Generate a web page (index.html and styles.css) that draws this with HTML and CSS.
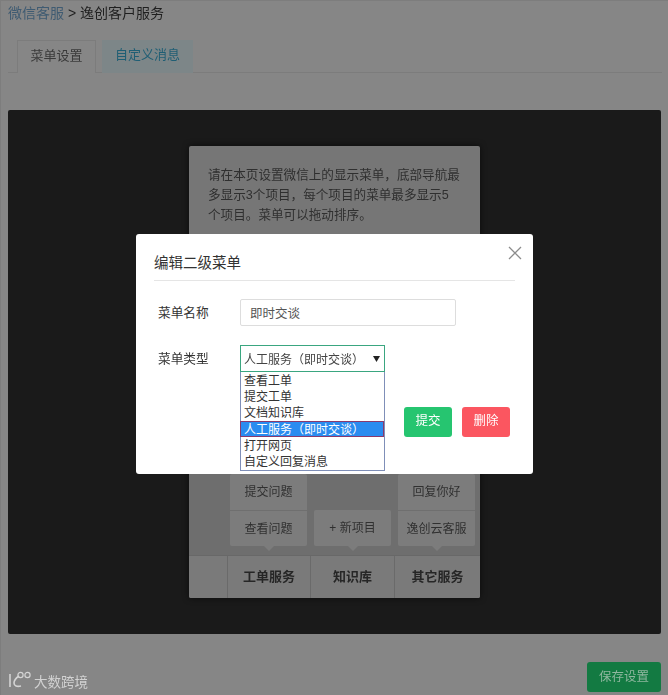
FILE: index.html
```html
<!DOCTYPE html>
<html lang="zh">
<head>
<meta charset="utf-8">
<title>微信客服</title>
<link rel="stylesheet" href="styles.css">
</head>
<body>
<div class="page">
  <div class="crumb"><a class="crumb-link">微信客服</a> &gt; 逸创客户服务</div>
  <div class="tabs">
    <div class="tab tab-active">菜单设置</div>
    <div class="tab tab-other">自定义消息</div>
  </div>
  <div class="stage">
    <div class="phone">
      <p class="intro">请在本页设置微信上的显示菜单，底部导航最<br>多显示3个项目，每个项目的菜单最多显示5<br>个项目。菜单可以拖动排序。</p>
      <div class="subs">
        <div class="subs-key"></div>
        <div class="sub-col">
          <div class="sub-stack"><div class="sub-item">提交问题</div><div class="sub-item">查看问题</div></div>
          <div class="caret"></div>
        </div>
        <div class="sub-col">
          <div class="sub-stack"><div class="sub-item">+ 新项目</div></div>
          <div class="caret"></div>
        </div>
        <div class="sub-col">
          <div class="sub-stack"><div class="sub-item">回复你好</div><div class="sub-item">逸创云客服</div></div>
          <div class="caret"></div>
        </div>
      </div>
      <div class="nav">
        <div class="nav-key"></div>
        <div class="nav-item nav-first">工单服务</div>
        <div class="nav-item">知识库</div>
        <div class="nav-item">其它服务</div>
      </div>
    </div>
  </div>
  <div class="footer">
    <div class="brand">
      <svg class="brand-logo" width="27" height="20" viewBox="0 0 27 20" fill="none" stroke="#d4d4d4" stroke-width="1.600">
        <path d="M3 4v13"/>
        <path d="M12 6c-3 2-5 5-5 7 0 3 3 4 7 3"/>
        <circle cx="13.500" cy="5" r="2.600" stroke-width="1.200"/>
        <circle cx="20.500" cy="5" r="2.600" stroke-width="1.200"/>
      </svg>
      <span>大数跨境</span>
    </div>
    <div class="save">保存设置</div>
  </div>
</div>

<div class="modal">
  <svg class="close" width="14" height="14" viewBox="0 0 14 14" stroke="#8c8c8c" stroke-width="1.300" fill="none"><path d="M1 1l12 12M13 1L1 13"/></svg>
  <h2 class="modal-title">编辑二级菜单</h2>
  <div class="modal-body">
    <div class="field">
      <label class="field-label">菜单名称</label>
      <div class="input">即时交谈</div>
    </div>
    <div class="field field-type">
      <label class="field-label">菜单类型</label>
      <div class="select-wrap">
        <div class="select"><span>人工服务（即时交谈）</span><svg width="7" height="6" viewBox="0 0 7 6"><path d="M0 0h7L3.500 6z" fill="#222"/></svg></div>
        <ul class="options">
          <li>查看工单</li>
          <li>提交工单</li>
          <li>文档知识库</li>
          <li class="option-on">人工服务（即时交谈）</li>
          <li>打开网页</li>
          <li>自定义回复消息</li>
        </ul>
      </div>
      <div class="actions">
        <div class="btn btn-ok">提交</div>
        <div class="btn btn-del">删除</div>
      </div>
    </div>
  </div>
</div>
</body>
</html>
```

FILE: styles.css
```css
* { box-sizing: border-box; }
html, body { margin: 0; padding: 0; }
body {
  width: 668px;
  height: 695px;
  overflow: hidden;
  background: #868686;
  font-family: "Liberation Sans", "Noto Sans CJK SC", sans-serif;
  color: #333;
  position: relative;
}
.page {
  height: 695px;
  padding: 0 6px 0 7px;
  display: flex;
  flex-direction: column;
  border: 1px solid #7d7d7d;
  border-width: 1px 0 0 1px;
  filter: blur(.35px);
}
.crumb {
  height: 27px;
  line-height: 25px;
  font-size: 14px;
  color: #1f1f1f;
}
.crumb-link { color: #3f5b72; }
.tabs {
  margin-top: 12px;
  height: 33px;
  padding-left: 9px;
  display: flex;
  gap: 6px;
  border-bottom: 1px solid #7c7c7c;
}
.tab {
  width: 79px;
  height: 33px;
  line-height: 30px;
  text-align: center;
  font-size: 13px;
}
.tab-active {
  color: #3a3a3a;
  background: #868686;
  border: 1px solid #7c7c7c;
  border-bottom: 0;
}
.tab-other {
  width: 91px;
  color: #1f5e74;
  background: #7d8688;
}
.stage {
  margin-top: 37px;
  width: 653px;
  height: 524px;
  background: #1a1a1a;
  border-radius: 2px;
  padding: 36px 0 0 181px;
}
.phone {
  width: 291px;
  height: 452px;
  background: #767676;
  border-radius: 2px;
  display: flex;
  flex-direction: column;
  box-shadow: 0 0 6px rgba(0, 0, 0, .6);
}
.intro {
  margin: 0;
  padding: 19px 0 0 19px;
  height: 314px;
  font-size: 12.600px;
  line-height: 20px;
  color: #2f2f2f;
  white-space: nowrap;
}
.subs {
  height: 96px;
  display: flex;
  background: #6e6e6e;
  border-bottom: 1px solid #686868;
}
.subs-key { width: 38px; flex: none; }
.sub-col {
  flex: none;
  width: 84px;
  padding: 0 4px 0 3px;
  display: flex;
  flex-direction: column;
  justify-content: flex-end;
}
.sub-stack {
  background: #7c7c7c;
  border-radius: 2px;
}
.sub-item {
  height: 36px;
  line-height: 36px;
  text-align: center;
  font-size: 12px;
  color: #303030;
}
.sub-item + .sub-item { border-top: 1px solid #6f6f6f; }
.caret {
  width: 0;
  height: 0;
  margin: 0 auto 4px;
  border: 5px solid transparent;
  border-top: 5px solid #7c7c7c;
  border-bottom: 0;
}
.nav {
  flex: 1;
  display: flex;
  background: #7a7a7a;
  border-radius: 0 0 2px 2px;
}
.nav-key { width: 39px; flex: none; border-right: 1px solid #6a6a6a; }
.nav-item {
  flex: none;
  width: 84px;
  line-height: 41px;
  text-align: center;
  font-size: 13px;
  font-weight: bold;
  color: #262626;
  border-right: 1px solid #6a6a6a;
}
.nav-first { width: 83px; }
.nav-item:last-child { flex: 1; border-right: 0; }
.footer {
  flex: 1;
  display: flex;
  justify-content: space-between;
  align-items: flex-end;
  padding-bottom: 3px;
}
.brand {
  display: flex;
  align-items: center;
  font-size: 13.500px;
  color: #d2d2d2;
  margin: 0 0 1px -1px;
}
.brand-logo { margin-top: -2px; }
.save {
  width: 74px;
  height: 30px;
  line-height: 30px;
  text-align: center;
  margin-right: 1px;
  background: #137a42;
  border-radius: 3px;
  font-size: 12.500px;
  color: #8fb79f;
}
.modal {
  position: absolute;
  left: 136px;
  top: 234px;
  width: 397px;
  height: 240px;
  background: #fff;
  border-radius: 3px;
  filter: blur(.35px);
}
.close { position: absolute; left: 372px; top: 12px; }
.modal-title {
  margin: 0 18px;
  height: 47px;
  line-height: 58px;
  font-size: 14.500px;
  font-weight: normal;
  color: #333;
  border-bottom: 1px solid #e5e5e5;
}
.modal-body { padding: 18px 0 0 22px; }
.field {
  display: flex;
  align-items: flex-start;
}
.field-label {
  width: 82px;
  flex: none;
  font-size: 12.700px;
  line-height: 28px;
  color: #333;
}
.input {
  width: 216px;
  height: 27px;
  line-height: 29px;
  padding-left: 9px;
  border: 1px solid #ddd;
  border-radius: 2px;
  font-size: 12.500px;
  color: #555;
}
.field-type { margin-top: 18px; position: relative; }
.select-wrap { width: 145px; }
.select {
  height: 27px;
  padding: 0 4px 0 3px;
  display: flex;
  align-items: center;
  justify-content: space-between;
  border: 1px solid #3aa680;
  font-size: 12px;
  color: #444;
}
.options {
  margin: 0;
  padding: 0;
  list-style: none;
  height: 99px;
  border: 1px solid #7f8fb8;
  border-top: 0;
  font-size: 12px;
  color: #333;
  position: relative;
  background: #fff;
}
.options li {
  padding-left: 3px;
  height: 16.200px;
  line-height: 19px;
  white-space: nowrap;
}
.options .option-on {
  background: #2a8cf0;
  color: #fff;
  outline: 1.500px solid #8a3a6c;
  outline-offset: -1px;
  margin-left: -1px;
  padding-left: 4px;
}
.actions {
  position: absolute;
  left: 246px;
  top: 62px;
  display: flex;
  gap: 10px;
}
.btn {
  width: 48px;
  height: 30px;
  line-height: 29px;
  text-align: center;
  border-radius: 3px;
  font-size: 12.500px;
  color: #fff;
}
.btn-ok { background: #26c570; }
.btn-del { background: #fb5660; }
```
